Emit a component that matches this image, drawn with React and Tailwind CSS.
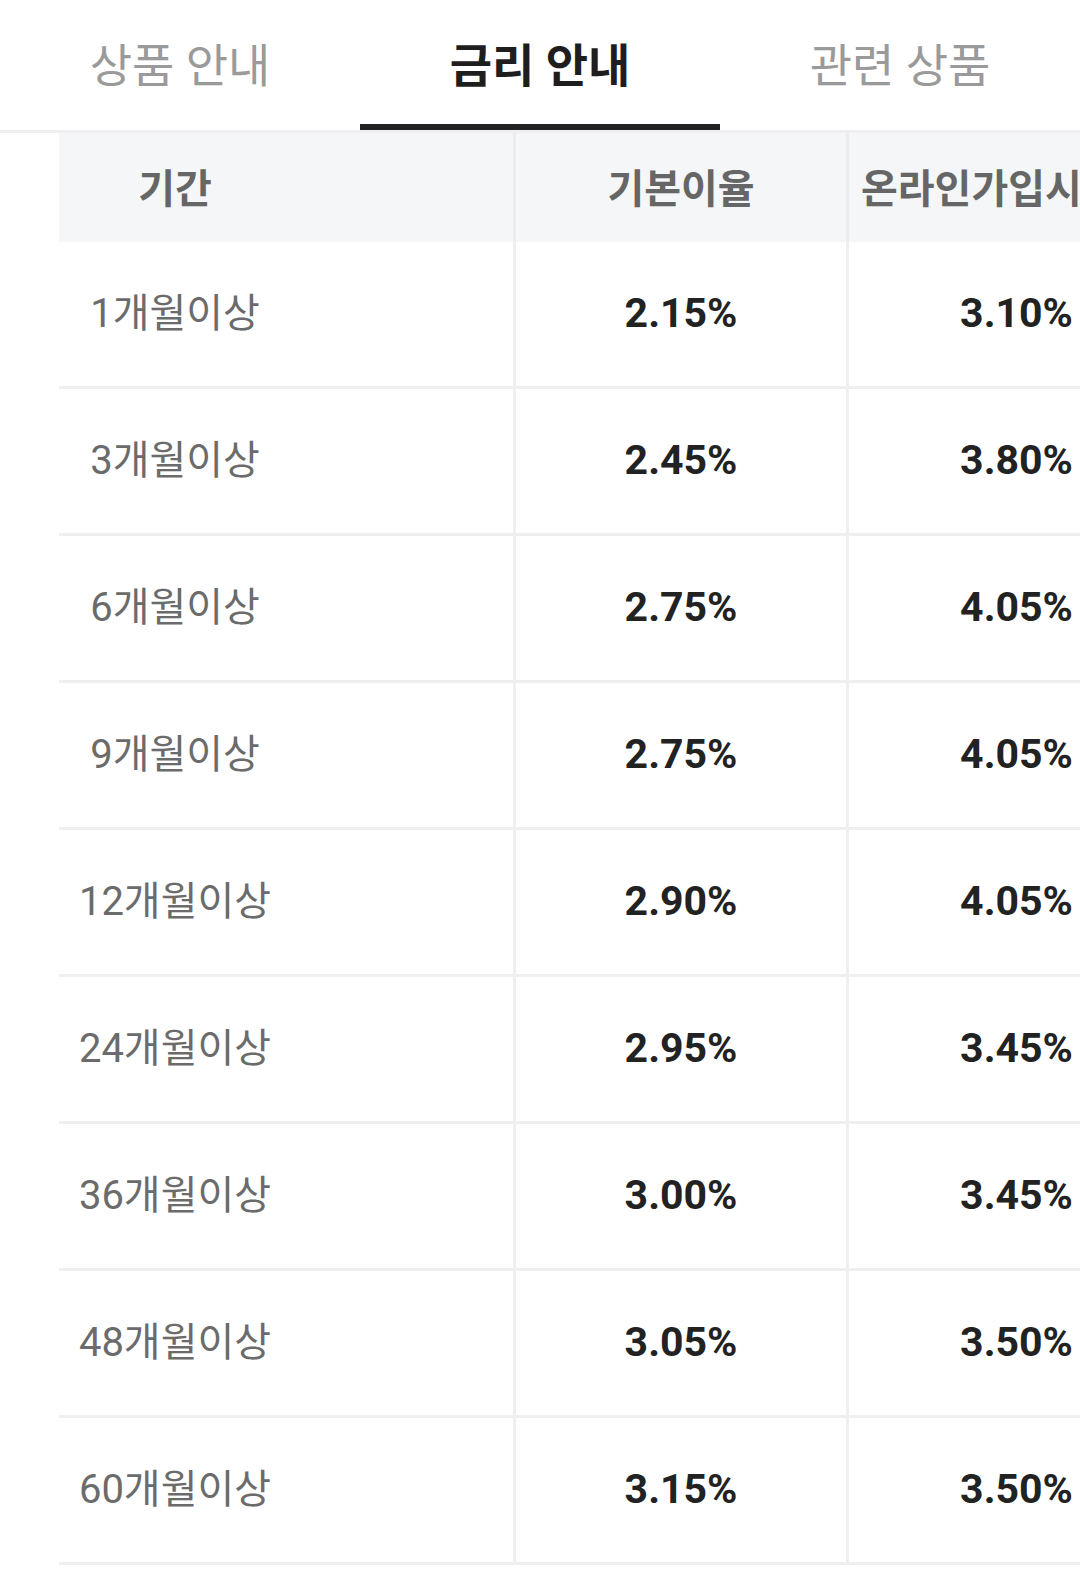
const tabs = ["상품 안내", "금리 안내", "관련 상품"];

const rates = [
  { term: "1개월이상", base: "2.15%", online: "3.10%" },
  { term: "3개월이상", base: "2.45%", online: "3.80%" },
  { term: "6개월이상", base: "2.75%", online: "4.05%" },
  { term: "9개월이상", base: "2.75%", online: "4.05%" },
  { term: "12개월이상", base: "2.90%", online: "4.05%" },
  { term: "24개월이상", base: "2.95%", online: "3.45%" },
  { term: "36개월이상", base: "3.00%", online: "3.45%" },
  { term: "48개월이상", base: "3.05%", online: "3.50%" },
  { term: "60개월이상", base: "3.15%", online: "3.50%" },
];

export default function App() {
  return (
    <div className="w-[1080px] min-h-[1592px] overflow-hidden bg-white font-['Roboto','Noto_Sans_CJK_KR',sans-serif]">
      {/* tabs */}
      <nav className="flex h-[133px] border-b-[3px] border-[#efeff1]">
        {tabs.map((t, i) => (
          <div key={t} className="relative flex flex-1 items-center justify-center pt-[2px]">
            <span
              className={
                i === 1
                  ? "text-[46px] font-bold text-[#1e1e1e]"
                  : "text-[46px] text-[#9a9a9a]"
              }
            >
              {t}
            </span>
            {i === 1 && <span className="absolute bottom-0 left-0 right-0 h-[6px] bg-[#222]" />}
          </div>
        ))}
      </nav>

      {/* rate table */}
      <div className="ml-[59px] w-[1125px]">
        <div className="grid h-[109px] grid-cols-[454px_333px_338px] bg-[#f5f6f8] pt-[5px]">
          <div className="flex items-center">
            <span className="w-[232px] text-center text-[40px] font-bold text-[#666]">기간</span>
          </div>
          <div className="-mt-[5px] flex items-center justify-center border-l-[3px] border-[#ececef] pt-[5px] text-[40px] font-bold text-[#666]">
            기본이율
          </div>
          <div className="-mt-[5px] flex items-center justify-start whitespace-nowrap border-l-[3px] border-[#ececef] pl-[12px] pt-[5px] text-[40px] font-bold text-[#666]">
            온라인가입시이율
          </div>
        </div>

        {rates.map((r) => (
          <div
            key={r.term}
            className="grid h-[147px] grid-cols-[454px_333px_338px] border-b-[3px] border-[#efeff1]"
          >
            <div className="flex items-center">
              <span className="w-[232px] text-center text-[40px] text-[#6b6b6b]">{r.term}</span>
            </div>
            <div className="flex items-center justify-center border-l-[3px] border-[#efeff1] text-[41px] font-bold text-[#222]">
              {r.base}
            </div>
            <div className="flex items-center justify-center border-l-[3px] border-[#efeff1] text-[41px] font-bold text-[#222]">
              {r.online}
            </div>
          </div>
        ))}
      </div>
    </div>
  );
}
